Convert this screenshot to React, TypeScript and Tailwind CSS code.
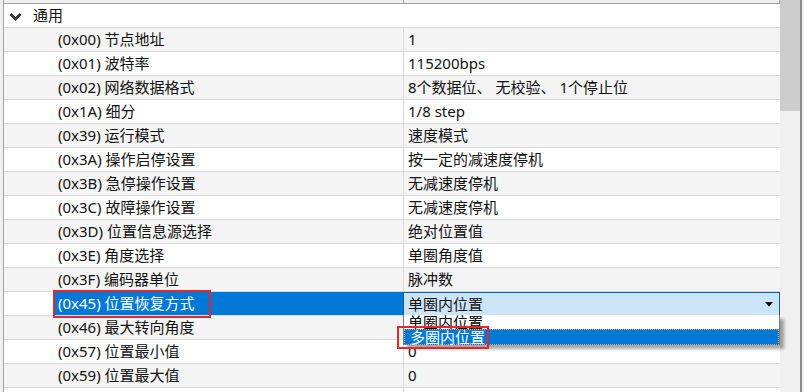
import React from 'react';

type Row = { code: string; name: string; value: string };

const rows: Row[] = [
    { code: '0x00', name: '节点地址', value: '1' },
    { code: '0x01', name: '波特率', value: '115200bps' },
    { code: '0x02', name: '网络数据格式', value: '8个数据位、 无校验、 1个停止位' },
    { code: '0x1A', name: '细分', value: '1/8 step' },
    { code: '0x39', name: '运行模式', value: '速度模式' },
    { code: '0x3A', name: '操作启停设置', value: '按一定的减速度停机' },
    { code: '0x3B', name: '急停操作设置', value: '无减速度停机' },
    { code: '0x3C', name: '故障操作设置', value: '无减速度停机' },
    { code: '0x3D', name: '位置信息源选择', value: '绝对位置值' },
    { code: '0x3E', name: '角度选择', value: '单圈角度值' },
    { code: '0x3F', name: '编码器单位', value: '脉冲数' },
    { code: '0x45', name: '位置恢复方式', value: '单圈内位置' },
    { code: '0x46', name: '最大转向角度', value: '0' },
    { code: '0x57', name: '位置最小值', value: '0' },
    { code: '0x59', name: '位置最大值', value: '0' },
    { code: '', name: '', value: '' },
];

const SELECTED = '0x45';

const App: React.FC = () => {
    return (
        <div
            className="w-[804px] h-[392px] overflow-hidden flex bg-[#f0f0f0] text-[15px] text-[#111]"
            style={{ fontFamily: '"Noto Sans", "Noto Sans CJK SC", sans-serif' }}
        >
            <div className="w-[3px] shrink-0" />

            {/* Property grid */}
            <div className="w-[777px] shrink-0 border-l border-[#a0a0a0] bg-white flex flex-col">
                {/* header (scrolled off) */}
                <div className="h-[4px] shrink-0 flex bg-[#f0f0f0] border-b border-[#a0a0a0]">
                    <div className="w-[400px] border-r border-[#a0a0a0]" />
                    <div className="grow border-r border-[#a0a0a0]" />
                </div>

                {/* group */}
                <div className="h-[24px] shrink-0 flex items-center border-b border-[#dadada] bg-white">
                    <svg width="29" height="24" viewBox="0 0 29 24" className="shrink-0">
                        <polyline points="6.5,10 11.5,15 16.5,10" fill="none" stroke="#333" strokeWidth="2.8" />
                    </svg>
                    <span className="leading-none">通用</span>
                </div>

                {rows.map((row, i) => {
                    const selected = row.code === SELECTED;
                    const bg = i % 2 === 0 ? 'bg-[#f4f4f4]' : 'bg-white';
                    return (
                        <div key={i} className={`h-[24px] shrink-0 flex border-b border-[#dadada] ${bg}`}>
                            <div className="w-[400px] shrink-0 flex border-r border-[#dadada]">
                                <div className="w-[51px] shrink-0" />
                                {row.code && (
                                    <div
                                        className={`relative grow flex items-center pl-[3px] whitespace-nowrap ${selected ? 'bg-[#0078d7] text-white' : ''}`}
                                    >
                                        ({row.code}) {row.name}
                                        {selected && (
                                            <div className="absolute left-[-2px] top-[-2px] w-[158px] h-[28px] border-2 border-[#e0282e]" />
                                        )}
                                    </div>
                                )}
                            </div>
                            <div className="relative grow flex items-center">
                                {selected ? (
                                    <>
                                        <div className="absolute left-[-1px] top-0 right-0 h-[24px] bg-[#cce4f7] border border-[#0a5ea8] flex items-center pl-[4px] pr-[6px]">
                                            <span className="grow">{row.value}</span>
                                            <svg width="8" height="5" viewBox="0 0 8 5">
                                                <polygon points="0,0 8,0 4,4.5" fill="#000" />
                                            </svg>
                                        </div>
                                        {/* dropdown list */}
                                        <div className="absolute left-[-1px] top-[23px] right-0 z-10 flex flex-col bg-white border-x border-[#7a7a7a] shadow-[4px_4px_3px_rgba(0,0,0,0.35)]">
                                            <div className="h-[14px] flex items-center pl-[4px] leading-[14px] overflow-visible whitespace-nowrap text-black">
                                                单圈内位置
                                            </div>
                                            <div className="h-[16px] flex items-center pl-[5px] leading-[14px] whitespace-nowrap bg-[#0078d7] text-white border border-dotted border-[#f0a040]">
                                                多圈内位置
                                            </div>
                                            <div className="absolute left-[-7px] top-[11px] w-[92px] h-[23px] border-2 border-[#e0282e]" />
                                        </div>
                                    </>
                                ) : (
                                    <span className="pl-[4px] whitespace-nowrap">{row.value}</span>
                                )}
                            </div>
                        </div>
                    );
                })}
            </div>

            {/* scrollbar */}
            <div className="w-[20px] shrink-0 flex flex-col bg-[#f0f0f0]">
                <div className="h-[111px] bg-[#cdcdcd]" />
            </div>
            <div className="w-[2px] shrink-0 bg-[#8a8a8a]" />
            <div className="grow bg-[#f0f0f0]" />
        </div>
    );
};

export default App;
